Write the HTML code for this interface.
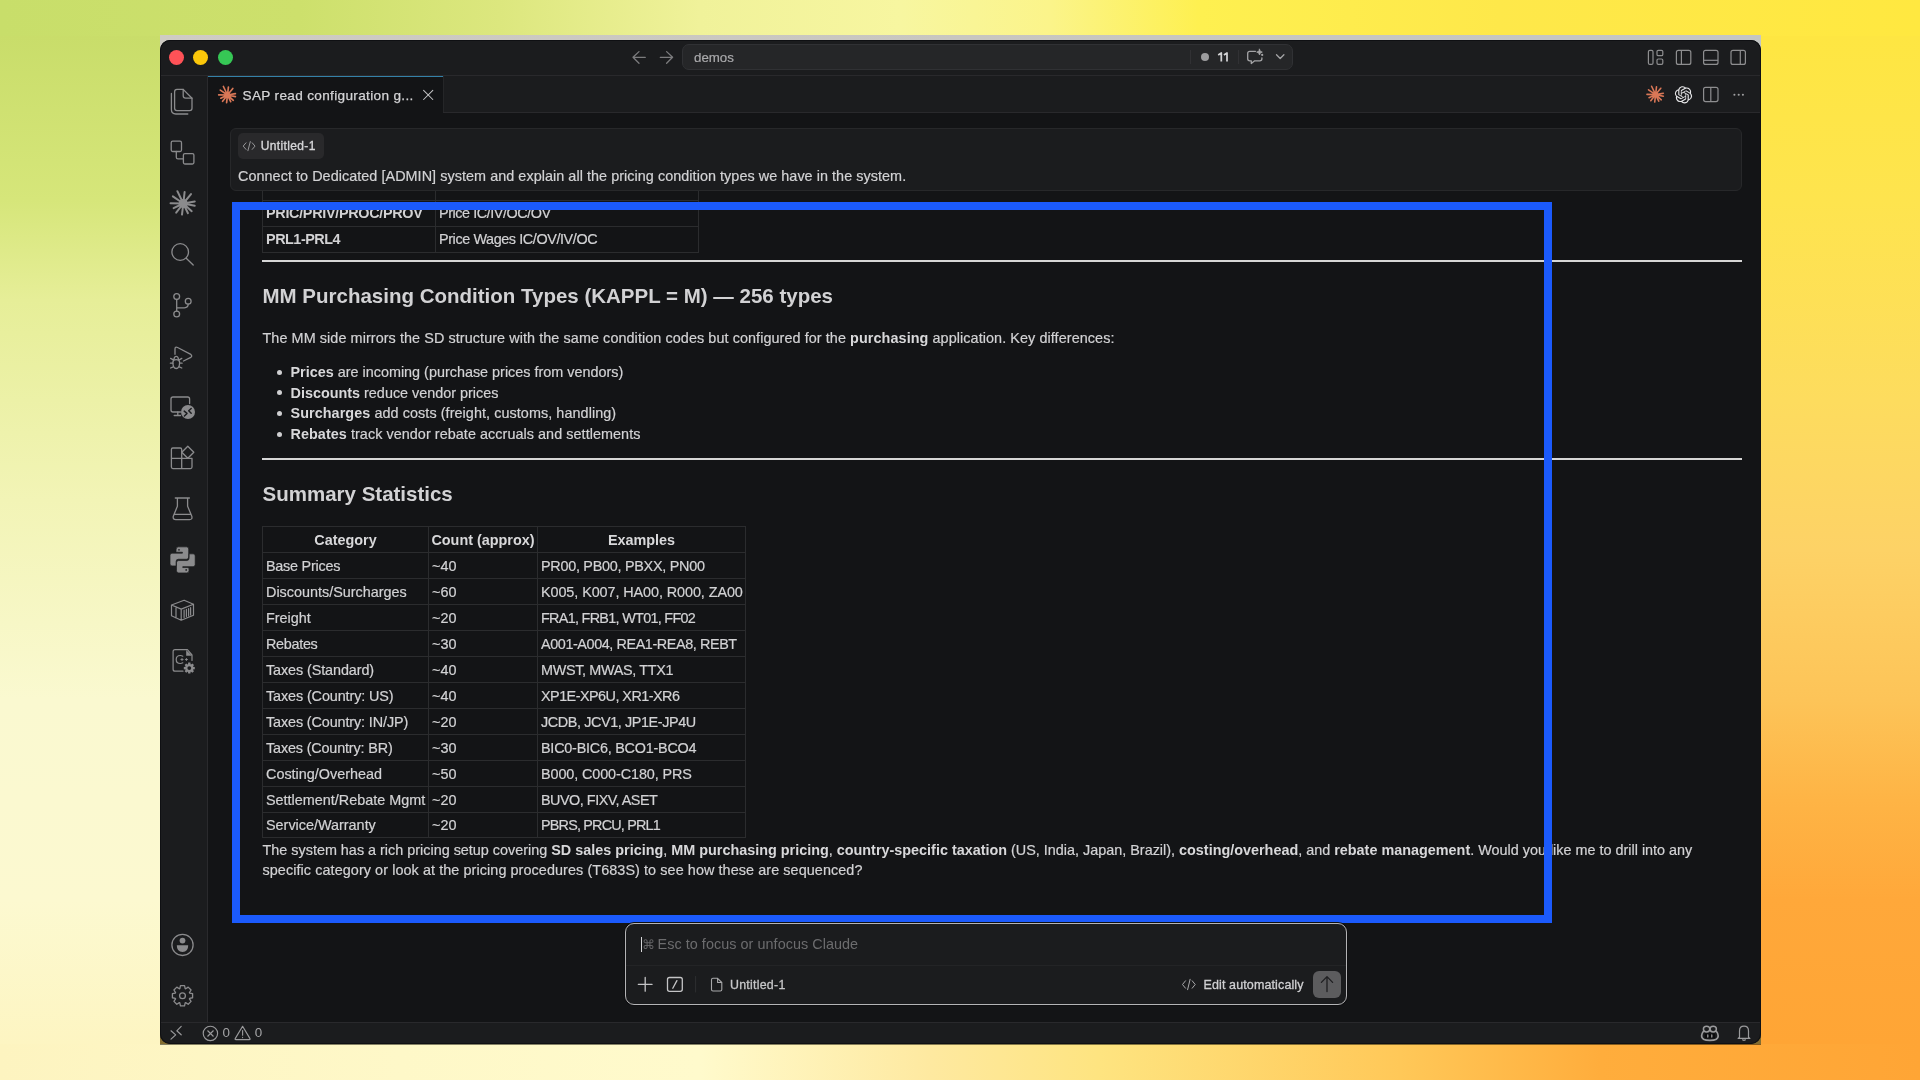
<!DOCTYPE html>
<html><head><meta charset="utf-8">
<style>
*{margin:0;padding:0;box-sizing:border-box}
html,body{width:1920px;height:1080px;overflow:hidden}
body{position:relative;font-family:"Liberation Sans",sans-serif;background:#fdd060}
.bg{position:absolute}
#bgT{left:0;top:0;width:1920px;height:36px;background:linear-gradient(to right,#c8de6a 0px,#cde06c 300px,#dce77e 500px,#f0f29a 700px,#f7f6a0 900px,#fbf48a 1050px,#fef050 1200px,#fee84a 1500px,#ffe840 1920px)}
#bgB{left:0;top:1044px;width:1920px;height:36px;background:linear-gradient(to right,#fdf4c0 0px,#fef8c8 400px,#fffacc 700px,#fee9a0 930px,#fee480 1100px,#ffc858 1400px,#ffad3c 1600px,#ffa535 1920px)}
#bgL{left:0;top:36px;width:160px;height:1008px;background:linear-gradient(to bottom,#c9dd6a 0px,#d6e67a 164px,#e6ee98 264px,#f2f4b6 464px,#faf9d0 664px,#fcf9d0 864px,#fdf5c2 1008px)}
#bgR{left:1761px;top:36px;width:159px;height:1008px;background:linear-gradient(to bottom,#fee642 0px,#fee44e 164px,#fddc5e 364px,#fdd266 514px,#fdc458 664px,#feb445 764px,#ffa83a 864px,#ffa535 1008px)}
.abs{position:absolute}
#winshadow{position:absolute;left:160px;top:35px;width:1601px;height:16px;background:linear-gradient(to right,#cfccc4,#c8c6c0 50%,#c4c6c4)}
#winframe{position:absolute;left:160px;top:51px;width:1601px;height:994px;background:rgba(10,10,0,.5)}
#win{position:absolute;left:160px;top:40px;width:1601px;height:1004px;background:#1b1c1e;border-radius:10px 10px 10px 10px;overflow:hidden}
#titlebar{position:absolute;left:0;top:0;width:1601px;height:36px;background:#1b1c1e;border-bottom:1px solid #29292c}
.tl{position:absolute;top:9.5px;width:15px;height:15px;border-radius:50%}
#actbar{position:absolute;left:0;top:36px;width:48px;height:946px;background:#1b1c1e;border-right:1px solid #2a2a2d}
#tabbar{position:absolute;left:48px;top:36px;width:1553px;height:37px;background:#1b1c1e;border-bottom:1px solid #29292c}
#editor{position:absolute;left:48px;top:73px;width:1553px;height:909px;background:#131416;overflow:hidden}
#statusbar{position:absolute;left:0;top:982px;width:1601px;height:22px;background:#1b1c1e;border-top:1px solid #29292c}

.txt{position:absolute;white-space:nowrap;font-size:14.4px;line-height:20px;color:#d2d2d4;-webkit-text-stroke:0.2px #d2d2d4}
.txt b{font-weight:bold;color:#d8d8da;-webkit-text-stroke:0}
.h2{position:absolute;white-space:nowrap;font-size:20.5px;line-height:26px;font-weight:bold;color:#d2d2d4}
table.md{position:absolute;border-collapse:collapse;font-size:14.4px;color:#d2d2d4;-webkit-text-stroke:0.2px #d2d2d4}
table.md b,table.md th{-webkit-text-stroke:0}
table.md tr.short td{height:25px}
table.md td,table.md th{border:1px solid #2b2c2e;height:26px;padding:0 0 0 3px;white-space:nowrap;text-align:left;vertical-align:middle;line-height:20px}
table.md th{font-weight:bold;text-align:center;padding:0;color:#d8d8da}
</style></head><body>
<div id="root" style="position:absolute;left:0;top:0;width:1920px;height:1080px;will-change:transform">
<div class="bg" id="bgT"></div><div class="bg" id="bgB"></div><div class="bg" id="bgL"></div><div class="bg" id="bgR"></div>
<div id="winshadow"></div><div id="winframe"></div>
<div id="win">
  <div id="titlebar">
    <div class="tl" style="left:8.5px;background:#ff5257"></div>
    <div class="tl" style="left:33px;background:#fbc70a"></div>
    <div class="tl" style="left:57.5px;background:#36c755"></div>
  </div>
  <div id="actbar"></div>
  <div id="tabbar"></div>
  <div id="editor"></div>
  <div id="statusbar"></div>
  <div style="position:absolute;left:0;top:0;width:1601px;height:1004px;border-radius:10px;box-shadow:inset 0 0 0 1px #0f1013"></div>
</div>


<!-- EDITOR CONTENT -->
<table class="md" style="left:262px;top:173.6px;width:437px">
 <tr><td style="width:173px"></td><td></td></tr>
 <tr><td><b><span style="letter-spacing:-0.305px">PRIC/PRIV/PROC/PROV</span></b></td><td><span style="letter-spacing:-0.435px">Price IC/IV/OC/OV</span></td></tr>
 <tr><td><b><span style="letter-spacing:-0.47px">PRL1-PRL4</span></b></td><td><span style="letter-spacing:-0.4px">Price Wages IC/OV/IV/OC</span></td></tr>
</table>
<div class="abs" style="left:262px;top:260px;width:1480px;height:2px;background:#d6d6d6"></div>
<div class="h2" style="left:262.5px;top:282.5px">MM Purchasing Condition Types (KAPPL = M) — 256 types</div>
<div class="txt" style="left:262.5px;top:328px;letter-spacing:0.077px">The MM side mirrors the SD structure with the same condition codes but configured for the <b>purchasing</b> application. Key differences:</div>
<div class="txt" style="left:290.5px;top:362px;line-height:20.67px">
 <div><b>Prices</b> are incoming (purchase prices from vendors)</div>
 <div><b>Discounts</b> reduce vendor prices</div>
 <div style="letter-spacing:0.068px"><b>Surcharges</b> add costs (freight, customs, handling)</div>
 <div style="letter-spacing:0.054px"><b>Rebates</b> track vendor rebate accruals and settlements</div>
</div>
<div class="abs" style="left:277.2px;top:369.6px;width:5px;height:5px;border-radius:50%;background:#cfcfd1"></div>
<div class="abs" style="left:277.2px;top:390.3px;width:5px;height:5px;border-radius:50%;background:#cfcfd1"></div>
<div class="abs" style="left:277.2px;top:410.9px;width:5px;height:5px;border-radius:50%;background:#cfcfd1"></div>
<div class="abs" style="left:277.2px;top:431.6px;width:5px;height:5px;border-radius:50%;background:#cfcfd1"></div>
<div class="abs" style="left:262px;top:458px;width:1480px;height:2px;background:#d6d6d6"></div>
<div class="h2" style="left:262.5px;top:481px">Summary Statistics</div>
<table class="md" style="left:262px;top:526px">
 <tr><th style="width:166px">Category</th><th style="width:109px">Count (approx)</th><th style="width:208px">Examples</th></tr>
 <tr><td><span style="letter-spacing:-0.24px">Base Prices</span></td><td>~40</td><td><span style="letter-spacing:-0.27px">PR00, PB00, PBXX, PN00</span></td></tr>
 <tr><td>Discounts/Surcharges</td><td>~60</td><td><span style="letter-spacing:-0.08px">K005, K007, HA00, R000, ZA00</span></td></tr>
 <tr><td>Freight</td><td>~20</td><td><span style="letter-spacing:-0.7px">FRA1, FRB1, WT01, FF02</span></td></tr>
 <tr><td><span style="letter-spacing:-0.3px">Rebates</span></td><td>~30</td><td><span style="letter-spacing:-0.41px">A001-A004, REA1-REA8, REBT</span></td></tr>
 <tr><td><span style="letter-spacing:-0.1px">Taxes (Standard)</span></td><td>~40</td><td><span style="letter-spacing:-0.34px">MWST, MWAS, TTX1</span></td></tr>
 <tr><td><span style="letter-spacing:-0.11px">Taxes (Country: US)</span></td><td>~40</td><td><span style="letter-spacing:-0.53px">XP1E-XP6U, XR1-XR6</span></td></tr>
 <tr><td><span style="letter-spacing:-0.12px">Taxes (Country: IN/JP)</span></td><td>~20</td><td><span style="letter-spacing:-0.4px">JCDB, JCV1, JP1E-JP4U</span></td></tr>
 <tr><td><span style="letter-spacing:-0.16px">Taxes (Country: BR)</span></td><td>~30</td><td><span style="letter-spacing:-0.23px">BIC0-BIC6, BCO1-BCO4</span></td></tr>
 <tr><td>Costing/Overhead</td><td>~50</td><td><span style="letter-spacing:-0.1px">B000, C000-C180, PRS</span></td></tr>
 <tr><td>Settlement/Rebate Mgmt</td><td>~20</td><td><span style="letter-spacing:-0.49px">BUVO, FIXV, ASET</span></td></tr>
 <tr class="short"><td>Service/Warranty</td><td>~20</td><td><span style="letter-spacing:-0.81px">PBRS, PRCU, PRL1</span></td></tr>
</table>
<div class="txt" style="left:262.5px;top:839.8px;line-height:20.4px">The system has a rich pricing setup covering <b>SD sales pricing</b>, <b>MM purchasing pricing</b>, <b>country-specific taxation</b> (US, India, Japan, Brazil), <b>costing/overhead</b>, and <b>rebate management</b>. Would you like me to drill into any<br><span style="letter-spacing:0.08px">specific category or look at the pricing procedures (T683S) to see how these are sequenced?</span></div>

<!-- PROMPT CARD -->
<div class="abs" style="left:230px;top:128px;width:1512px;height:63px;background:#1b1c1e;border:1px solid #27282a;border-radius:6px"></div>
<div class="abs" style="left:238px;top:133px;width:86px;height:26px;background:#29292b;border-radius:5px"></div>
<svg class="abs" style="left:240px;top:138px" width="18" height="16" viewBox="240 138 18 16" fill="none" stroke="#9c9c9e" stroke-width="0.95" stroke-linecap="round" stroke-linejoin="round"><path d="M246 142.8L243.2 146.1L246 149.4M252.2 142.8L255 146.1L252.2 149.4M250.3 141.6L247.9 150.7"/></svg>
<div class="abs" style="left:260.8px;top:136px;height:20px;line-height:20px;font-size:12px;letter-spacing:0.36px;color:#d6d6d8;-webkit-text-stroke:0.35px #d6d6d8;white-space:nowrap">Untitled-1</div>
<div class="txt" style="left:238px;top:165.5px;letter-spacing:0.05px">Connect to Dedicated [ADMIN] system and explain all the pricing condition types we have in the system.</div>


<!-- BLUE BOX -->
<div class="abs" style="left:232px;top:202px;width:1320px;height:721px;border:8px solid #1b5afc"></div>
<!-- OPENAI LOGO -->
<svg class="abs" style="left:1672px;top:83px" width="24" height="24" viewBox="0 0 24 24"><g transform="translate(11.5 11.8) scale(0.72) translate(-12 -12)"><path d="M22.2819 9.8211a5.9847 5.9847 0 0 0-.5157-4.9108 6.0462 6.0462 0 0 0-6.5098-2.9A6.0651 6.0651 0 0 0 4.9807 4.1818a5.9847 5.9847 0 0 0-3.9977 2.9 6.0462 6.0462 0 0 0 .7427 7.0966 5.98 5.98 0 0 0 .511 4.9107 6.051 6.051 0 0 0 6.5146 2.9001A5.9847 5.9847 0 0 0 13.2599 24a6.0557 6.0557 0 0 0 5.7718-4.2058 5.9894 5.9894 0 0 0 3.9977-2.9001 6.0557 6.0557 0 0 0-.7475-7.0729zm-9.022 12.6081a4.4755 4.4755 0 0 1-2.8764-1.0408l.1419-.0804 4.7783-2.7582a.7948.7948 0 0 0 .3927-.6813v-6.7369l2.02 1.1686a.071.071 0 0 1 .038.052v5.5826a4.504 4.504 0 0 1-4.4945 4.4944zm-9.6607-4.1254a4.4708 4.4708 0 0 1-.5346-3.0137l.142.0852 4.783 2.7582a.7712.7712 0 0 0 .7806 0l5.8428-3.3685v2.3324a.0804.0804 0 0 1-.0332.0615L9.74 19.9502a4.4992 4.4992 0 0 1-6.1408-1.6464zM2.3408 7.8956a4.485 4.485 0 0 1 2.3655-1.9728V11.6a.7664.7664 0 0 0 .3879.6765l5.8144 3.3543-2.0201 1.1685a.0757.0757 0 0 1-.071 0l-4.8303-2.7865A4.504 4.504 0 0 1 2.3408 7.872zm16.5963 3.8558L13.1038 8.364 15.1192 7.2a.0757.0757 0 0 1 .071 0l4.8303 2.7913a4.4944 4.4944 0 0 1-.6765 8.1042v-5.6772a.79.79 0 0 0-.407-.667zm2.0107-3.0231l-.142-.0852-4.7735-2.7818a.7759.7759 0 0 0-.7854 0L9.409 9.2297V6.8974a.0662.0662 0 0 1 .0284-.0615l4.8303-2.7866a4.4992 4.4992 0 0 1 6.6802 4.66zM8.3065 12.863l-2.02-1.1638a.0804.0804 0 0 1-.038-.0567V6.0742a4.4992 4.4992 0 0 1 7.3757-3.4537l-.142.0805L8.704 5.459a.7948.7948 0 0 0-.3927.6813zm1.0976-2.3654l2.602-1.4998 2.6069 1.4998v2.9994l-2.5974 1.4997-2.6067-1.4997Z" fill="#e6e6e8"/></g></svg>
<!-- CHAT INPUT -->
<div class="abs" style="left:624px;top:922px;width:724px;height:84px;border-radius:10px;background:#0e0e10"></div>
<div class="abs" style="left:625px;top:923px;width:722px;height:82px;border:1.5px solid #b4b4b6;border-radius:9px;background:#1b1c1e"></div>
<div class="abs" style="left:626px;top:965px;width:720px;height:1px;background:#232426"></div>
<div class="abs" style="left:640.8px;top:936.5px;width:1.2px;height:15.5px;background:#d8d8da"></div>
<div class="abs" style="left:641.5px;top:934.7px;height:20px;line-height:20px;font-size:12.6px;color:#646466;white-space:nowrap">&#8984;</div>
<div class="txt" style="left:657.5px;top:933.5px;color:#6c6c6e;letter-spacing:0.05px;-webkit-text-stroke:0">Esc to focus or unfocus Claude</div>
<svg class="abs" style="left:630px;top:970px" width="100" height="28" viewBox="630 970 100 28" fill="none" stroke="#c4c4c6" stroke-width="1.3" stroke-linecap="round" stroke-linejoin="round">
 <path d="M645.2 977.5V991.2M638.3 984.3H652.1"/>
 <rect x="667.5" y="977.5" width="14.8" height="13.8" rx="2"/>
 <path d="M676.9 980.6L672.8 988.3"/>
 <path d="M695.6 976.5V992" stroke="#2e2f31" stroke-width="1"/>
 <path d="M713 978.3H717.6L721.8 982.5V989.5Q721.8 991 720.3 991H713Q711.5 991 711.5 989.5V979.8Q711.5 978.3 713 978.3ZM717.6 978.3V982.5H721.8" stroke="#a8a8aa" stroke-width="1.1"/>
</svg>
<div class="abs" style="left:730px;top:974.5px;height:20px;line-height:20px;font-size:12.4px;letter-spacing:0.25px;color:#c6c6c8;-webkit-text-stroke:0.3px #c6c6c8;white-space:nowrap">Untitled-1</div>
<svg class="abs" style="left:1178px;top:974px" width="22" height="20" viewBox="1178 974 22 20" fill="none" stroke="#a8a8aa" stroke-width="1" stroke-linecap="round" stroke-linejoin="round"><path d="M1185.5 980.8L1182.5 984.5L1185.5 988.2M1192.2 980.8L1195.2 984.5L1192.2 988.2M1190.1 979.3L1187.6 989.7"/></svg>
<div class="abs" style="left:1203.5px;top:974.5px;height:20px;line-height:20px;font-size:12.5px;letter-spacing:0.12px;color:#d0d0d2;-webkit-text-stroke:0.3px #d0d0d2;white-space:nowrap">Edit automatically</div>
<div class="abs" style="left:1313px;top:971px;width:28px;height:27px;border-radius:6px;background:#5c5c5e"></div>
<svg class="abs" style="left:1313px;top:971px" width="28" height="27" viewBox="1313 971 28 27" fill="none" stroke="#1f1f21" stroke-width="1.3" stroke-linecap="round" stroke-linejoin="round"><path d="M1327 977V991.6M1321.4 982.4L1327 976.6L1332.6 982.4"/></svg>
<!-- STATUS BAR -->
<svg class="abs" style="left:160px;top:1022px" width="120" height="22" viewBox="160 1022 120 22" fill="none" stroke="#9a9a9c" stroke-width="1.15" stroke-linecap="round" stroke-linejoin="round">
 <path d="M171 1030.8L175.7 1034.9L171 1039.2M181.2 1026.4L176.8 1030.8L181.2 1034.8"/>
 <circle cx="210.4" cy="1033.4" r="7.2"/>
 <path d="M207.5 1030.5L213.5 1036.5M213.5 1030.5L207.5 1036.5" stroke-linecap="butt"/>
 <path d="M242.6 1026.3L250 1038.6Q250.4 1039.6 249.3 1039.6H235.9Q234.8 1039.6 235.2 1038.6Z"/>
 <path d="M242.6 1030.5V1035.2M242.6 1037.4V1037.6"/>
</svg>
<div class="abs" style="left:222.5px;top:1023.3px;height:20px;line-height:20px;font-size:13.4px;color:#a4a4a6">0</div>
<div class="abs" style="left:254.8px;top:1023.3px;height:20px;line-height:20px;font-size:13.4px;color:#a4a4a6">0</div>
<svg class="abs" style="left:1695px;top:1022px" width="60" height="22" viewBox="1695 1022 60 22" fill="none" stroke="#9a9a9c" stroke-width="1.2" stroke-linecap="round" stroke-linejoin="round">
 <ellipse cx="1706.6" cy="1029.1" rx="3.2" ry="2.9" stroke-width="1.5"/>
 <ellipse cx="1713.2" cy="1029.1" rx="3.2" ry="2.9" stroke-width="1.5"/>
 <path d="M1703.3 1031.5Q1701.6 1033.5 1701.6 1036Q1701.6 1040.4 1709.9 1040.4Q1718.2 1040.4 1718.2 1036Q1718.2 1033.5 1716.5 1031.5" stroke-width="1.7"/>
 <path d="M1704.7 1033.5H1715.1V1038.3H1704.7Z" fill="#0b0b0d" stroke="none"/>
 <path d="M1707.8 1035V1037M1711.8 1035V1037" stroke-width="1.3"/>
 <path d="M1744 1026.2Q1739.5 1026.2 1739.5 1031V1037.3L1738.1 1038.4H1749.9L1748.5 1037.3V1031Q1748.5 1026.2 1744 1026.2ZM1742.6 1039.8Q1744 1041 1745.4 1039.8"/>
</svg>

<!-- TITLEBAR CONTENT -->
<svg class="abs" style="left:628px;top:47px" width="50" height="20" viewBox="628 47 50 20" fill="none" stroke="#7c7c7e" stroke-width="1.3" stroke-linecap="round" stroke-linejoin="round">
 <path d="M645.3 57.3H633M639 51.6L633 57.3L639 63.2"/>
 <path d="M660.3 57.3H672.6M666.6 51.6L672.6 57.3L666.6 63.2"/>
</svg>
<div class="abs" style="left:682px;top:44px;width:611px;height:26px;background:#252628;border:1px solid #303134;border-radius:7px"></div>
<div class="abs" style="left:694px;top:48.7px;height:18px;line-height:18px;font-size:13.3px;color:#a9a9ab;-webkit-text-stroke:0.2px #a9a9ab">demos</div>
<div class="abs" style="left:1190px;top:50px;width:1px;height:14px;background:#313134"></div>
<div class="abs" style="left:1200.8px;top:52.8px;width:8.5px;height:8.5px;border-radius:50%;background:#9c9c9e"></div>
<svg class="abs" style="left:1214px;top:50px" width="18" height="14" viewBox="1214 50 18 14" fill="none" stroke="#d2d2d4" stroke-width="1.75" stroke-linejoin="round"><path d="M1218.2 54.9L1221.3 53V61.6M1223.9 54.9L1227 53V61.6"/></svg>
<div class="abs" style="left:1238px;top:50px;width:1px;height:14px;background:#313134"></div>
<svg class="abs" style="left:1245px;top:46px" width="44" height="22" viewBox="1245 46 44 22" fill="none" stroke="#a4a4a6" stroke-width="1.3" stroke-linejoin="round" stroke-linecap="round">
 <path d="M1255.5 51.3H1249.8Q1247.7 51.3 1247.7 53.4V58.7Q1247.7 60.8 1249.8 60.8H1251.3V63.5L1254.7 60.8H1259.8Q1261.9 60.8 1261.9 58.7V57.8"/>
 <path d="M1259.5 49.2L1260.3 51.3L1262.3 52.1L1260.3 52.9L1259.5 55L1258.7 52.9L1256.7 52.1L1258.7 51.3Z" fill="#a4a4a6" stroke-width="0.8"/>
 <circle cx="1262.2" cy="54.9" r="1.1" fill="#a4a4a6" stroke="none"/>
 <path d="M1276.5 54.8L1280.2 58.5L1283.9 54.8"/>
</svg>
<svg class="abs" style="left:1640px;top:44px" width="115" height="26" viewBox="1640 44 115 26" fill="none" stroke="#8e8e90" stroke-width="1.2">
 <rect x="1648.4" y="50.3" width="4.6" height="14.1" rx="1.5"/>
 <rect x="1657" y="50.3" width="5.8" height="5.4" rx="1.3"/>
 <rect x="1657" y="59" width="5.8" height="5.4" rx="1.3"/>
 <rect x="1676.4" y="50.3" width="14.4" height="14.1" rx="2"/>
 <path d="M1681.4 50.3V64.4"/>
 <rect x="1703.6" y="50.3" width="14.4" height="14.1" rx="2"/>
 <path d="M1703.6 60.3H1718"/>
 <rect x="1731" y="50.3" width="14.4" height="14.1" rx="2"/>
 <path d="M1740.3 50.3V64.4"/>
</svg>

<!-- TAB -->
<div class="abs" style="left:208px;top:76px;width:235px;height:37px;background:#131416;border-top:1px solid #3481a8"></div>
<div class="abs" style="left:443px;top:76px;width:1px;height:36px;background:#252628"></div>
<svg class="abs" style="left:210px;top:80px" width="36" height="30" viewBox="210 80 36 30"><path d="M227.50 95.00L223.40 86.50M227.50 95.00L228.40 87.10M227.50 95.00L232.80 88.50M227.50 95.00L235.40 93.60M227.50 95.00L235.40 96.60M227.50 95.00L233.30 100.30M227.50 95.00L230.70 101.70M227.50 95.00L226.60 102.60M227.50 95.00L222.60 101.30M227.50 95.00L220.80 98.20M227.50 95.00L218.70 94.80M227.50 95.00L220.30 90.10" stroke="#d97757" stroke-width="1.7" stroke-linecap="round" fill="none"/><circle cx="227.5" cy="95" r="2.6" fill="#d97757"/></svg>
<div class="abs" style="left:242.5px;top:86px;height:20px;line-height:20px;font-size:13.6px;letter-spacing:0.33px;color:#d4d4d6;-webkit-text-stroke:0.25px #d4d4d6;white-space:nowrap">SAP read configuration g...</div>
<svg class="abs" style="left:420px;top:86px" width="18" height="18" viewBox="420 86 18 18" stroke="#c4c4c6" stroke-width="1.05" stroke-linecap="round"><path d="M423.6 90.4L432.8 99.5M432.8 90.4L423.6 99.5"/></svg>
<svg class="abs" style="left:1640px;top:80px" width="115" height="30" viewBox="1640 80 115 30">
 <path d="M1655.60 94.60L1651.58 86.27M1655.60 94.60L1656.48 86.86M1655.60 94.60L1660.79 88.23M1655.60 94.60L1663.34 93.23M1655.60 94.60L1663.34 96.17M1655.60 94.60L1661.28 99.79M1655.60 94.60L1658.74 101.17M1655.60 94.60L1654.72 102.05M1655.60 94.60L1650.80 100.77M1655.60 94.60L1649.03 97.74M1655.60 94.60L1646.98 94.40M1655.60 94.60L1648.54 89.80" stroke="#d97757" stroke-width="1.6" stroke-linecap="round" fill="none"/><circle cx="1655.6" cy="94.6" r="2.548" fill="#d97757"/>
 <rect x="1703.6" y="87.3" width="14.4" height="14.3" rx="2" fill="none" stroke="#8e8e90" stroke-width="1.2"/>
 <path d="M1710.8 87.3V101.6" stroke="#8e8e90" stroke-width="1.2"/>
 <circle cx="1734.4" cy="94.8" r="1.05" fill="#a0a0a2"/><circle cx="1738.7" cy="94.8" r="1.05" fill="#a0a0a2"/><circle cx="1742.9" cy="94.8" r="1.05" fill="#a0a0a2"/>
</svg>

<!-- ACTIVITY BAR ICONS -->
<svg class="abs" style="left:160px;top:76px" width="47" height="946" viewBox="160 76 47 946" fill="none" stroke="#8b8b8d" stroke-width="1.3" stroke-linecap="round" stroke-linejoin="round">
 <!-- explorer -->
 <path d="M177 89.4H183.2L192 98.2V108.2Q192 110.6 189.6 110.6H177Q174.6 110.6 174.6 108.2V91.8Q174.6 89.4 177 89.4Z"/>
 <path d="M183.2 89.4V95.8Q183.2 98.2 185.6 98.2H192"/>
 <path d="M171.4 93.4V109.6Q171.4 114 175.8 114H187.8"/>
 <!-- tree -->
 <rect x="171.2" y="141.2" width="10.3" height="10.3" rx="1.5"/>
 <rect x="183.4" y="153.6" width="10.5" height="10.4" rx="1.5"/>
 <path d="M176.3 151.5V157.2Q176.3 158.8 177.9 158.8H183.4"/>
 <!-- star -->
 <path d="M183.30 203.50L177.36 191.18M183.30 203.50L184.61 192.04M183.30 203.50L190.99 194.07M183.30 203.50L194.76 201.47M183.30 203.50L194.76 205.82M183.30 203.50L191.71 211.19M183.30 203.50L187.94 213.22M183.30 203.50L182.00 214.52M183.30 203.50L176.20 212.63M183.30 203.50L173.59 208.14M183.30 203.50L170.54 203.21M183.30 203.50L172.86 196.40" stroke="#8b8b8d" stroke-width="2.0" stroke-linecap="round" fill="none"/><circle cx="183.3" cy="203.5" r="3.77" fill="#8b8b8d"/>
 <!-- search -->
 <circle cx="180.2" cy="252" r="8.3"/>
 <path d="M186.2 258.2L193.2 265"/>
 <!-- scm -->
 <circle cx="176.7" cy="296.6" r="2.9"/>
 <circle cx="176.7" cy="314" r="2.9"/>
 <circle cx="188.2" cy="301.2" r="2.9"/>
 <path d="M176.7 299.5V311.1M188.2 304.1Q188.2 307.8 184.5 307.8H176.7"/>
 <!-- debug -->
 <path d="M175 354.3V349Q175 346.2 177.6 347.5L190.8 354.4Q192.6 355.9 190.8 357.3L183.5 361"/>
 <path d="M172.9 362.2Q172.9 368.5 176.2 368.5Q179.6 368.5 179.6 362.2Q179.6 359.6 176.2 359.6Q172.9 359.6 172.9 362.2Z"/>
 <path d="M173.9 359.4Q174.3 356.4 176.2 356.4Q178.1 356.4 178.5 359.4M170.6 358.4L172.9 359.6M181.8 358.4L179.6 359.6M170.4 363.2H172.8M179.7 363.2H182.1M170.6 368L173.2 366.8M181.8 368L179.2 366.8"/>
 <!-- remote -->
 <path d="M189.6 403.6V399Q189.6 397 187.6 397H173Q171 397 171 399V410Q171 412 173 412H180.5"/>
 <path d="M177.8 412V415.5M174.2 415.5H180.5"/>
 <circle cx="188" cy="412" r="7" fill="#8b8b8d" stroke="none"/>
 <path d="M184.2 411.1L187 413.4L184.4 416.1M191.2 408.5L188.7 410.8L191.2 413.3" stroke="#1b1c1e" stroke-width="1.45"/>
 <!-- extensions -->
 <path d="M171.4 449.5V467.1Q171.4 468.6 172.9 468.6H190.5Q192 468.6 192 467.1V458.3H171.4M181.7 468.6V449.5Q181.7 448 180.2 448H172.9Q171.4 448 171.4 449.5"/>
 <path d="M187.8 446.2L193.8 452.2L187.8 458.2L181.8 452.2Z"/>
 <!-- flask -->
 <path d="M175.3 498H189.4M177.4 498V506.2L173.3 516.2Q172.6 519.6 175.8 519.6H189.6Q192.6 519.6 191.8 516.2L187.6 506.2V498M174.2 514.4H190.8"/>
 <!-- python -->
 <path d="M176.11 549.07Q176.11 546.85 178.33 546.85L186.48 546.85Q188.70 546.85 188.70 549.07L188.70 557.04Q188.70 559.26 186.48 559.26L178.33 559.26Q176.11 559.26 176.11 561.48L176.11 565.93Q176.11 565.93 176.11 565.93L172.04 565.93Q170.00 565.93 170.00 563.89L170.00 555.19Q170.00 553.15 172.04 553.15L182.41 553.15Q182.41 553.15 182.41 553.15L182.41 552.22Q182.41 552.22 182.41 552.22L176.11 552.22Q176.11 552.22 176.11 552.22ZM189.07 570.70Q189.07 572.93 186.85 572.93L178.70 572.93Q176.48 572.93 176.48 570.70L176.48 562.74Q176.48 560.52 178.70 560.52L186.85 560.52Q189.07 560.52 189.07 558.30L189.07 553.85Q189.07 553.85 189.07 553.85L193.15 553.85Q195.19 553.85 195.19 555.89L195.19 564.59Q195.19 566.63 193.15 566.63L182.78 566.63Q182.78 566.63 182.78 566.63L182.78 567.56Q182.78 567.56 182.78 567.56L189.07 567.56Q189.07 567.56 189.07 567.56Z" fill="#8b8b8d" stroke="#1b1c1e" stroke-width="0.7"/>
 <path d="176.48 552.78L182.41 552.78" stroke="#1b1c1e" stroke-width="0.9"/>
 <path d="188.70 567.00L182.78 567.00" stroke="#1b1c1e" stroke-width="0.9"/>
 <circle cx="179.00" cy="549.81" r="0.85" fill="#1b1c1e" stroke="none"/>
 <circle cx="186.19" cy="569.96" r="0.85" fill="#1b1c1e" stroke="none"/>
 <!-- container -->
 <path d="M171.5 605V615.8L181.2 620.2L193.5 615.2V604.2L184.1 600.2L171.5 605L181.2 609.1L193.5 604.2M181.2 609.1V620.2M176 606.9V617.9M184.1 610.2V617.4M186.4 609.3V616.6M188.6 608.5V615.8M190.6 607.7V614.9" stroke-width="1.2"/>
 <!-- cpp -->
 <path d="M183 671.2H175.1Q173.1 671.2 173.1 669.2V651.6Q173.1 649.6 175.1 649.6H187.4L192 655V660.5" stroke-width="1.2"/>
 <path d="M186.2 650V655.7H192Z" fill="#8b8b8d" stroke="none"/>
 <path d="M182.8 656.2Q181.7 655.5 180.3 655.5Q176.2 655.5 176.2 659.5Q176.2 663.5 180.3 663.5Q181.7 663.5 182.8 662.8" stroke-width="1.2"/>
 <path d="M180.9 659.5H183.1M182 658.4V660.6M185.3 659.5H187.5M186.4 658.4V660.6" stroke-width="0.9"/>
 <path d="M187.97 664.33L188.19 662.61L190.41 662.61L190.63 664.33L191.02 664.49L192.39 663.43L193.97 665.01L192.91 666.38L193.07 666.77L194.79 666.99L194.79 669.21L193.07 669.43L192.91 669.82L193.97 671.19L192.39 672.77L191.02 671.71L190.63 671.87L190.41 673.59L188.19 673.59L187.97 671.87L187.58 671.71L186.21 672.77L184.63 671.19L185.69 669.82L185.53 669.43L183.81 669.21L183.81 666.99L185.53 666.77L185.69 666.38L184.63 665.01L186.21 663.43L187.58 664.49Z" fill="#8b8b8d" stroke="none"/>
 <circle cx="189.3" cy="668.1" r="1.9" fill="#1b1c1e" stroke="none"/>
 <!-- account -->
 <circle cx="182.5" cy="944.9" r="10.6"/>
 <circle cx="182.5" cy="940.6" r="2.9" fill="#8b8b8d" stroke="none"/>
 <path d="M176.8 945.3H188.2Q188.2 952 182.5 952Q176.8 952 176.8 945.3Z" fill="#8b8b8d" stroke="none"/>
 <!-- settings -->
 <path d="M179.82 988.59L180.45 985.61L184.55 985.61L185.18 988.59L185.64 988.78L188.19 987.12L191.08 990.01L189.42 992.56L189.61 993.02L192.59 993.65L192.59 997.75L189.61 998.38L189.42 998.84L191.08 1001.39L188.19 1004.28L185.64 1002.62L185.18 1002.81L184.55 1005.79L180.45 1005.79L179.82 1002.81L179.36 1002.62L176.81 1004.28L173.92 1001.39L175.58 998.84L175.39 998.38L172.41 997.75L172.41 993.65L175.39 993.02L175.58 992.56L173.92 990.01L176.81 987.12L179.36 988.78Z" stroke-width="1.3"/>
 <circle cx="182.5" cy="995.7" r="2.9"/>
</svg>
</div>
</body></html>
